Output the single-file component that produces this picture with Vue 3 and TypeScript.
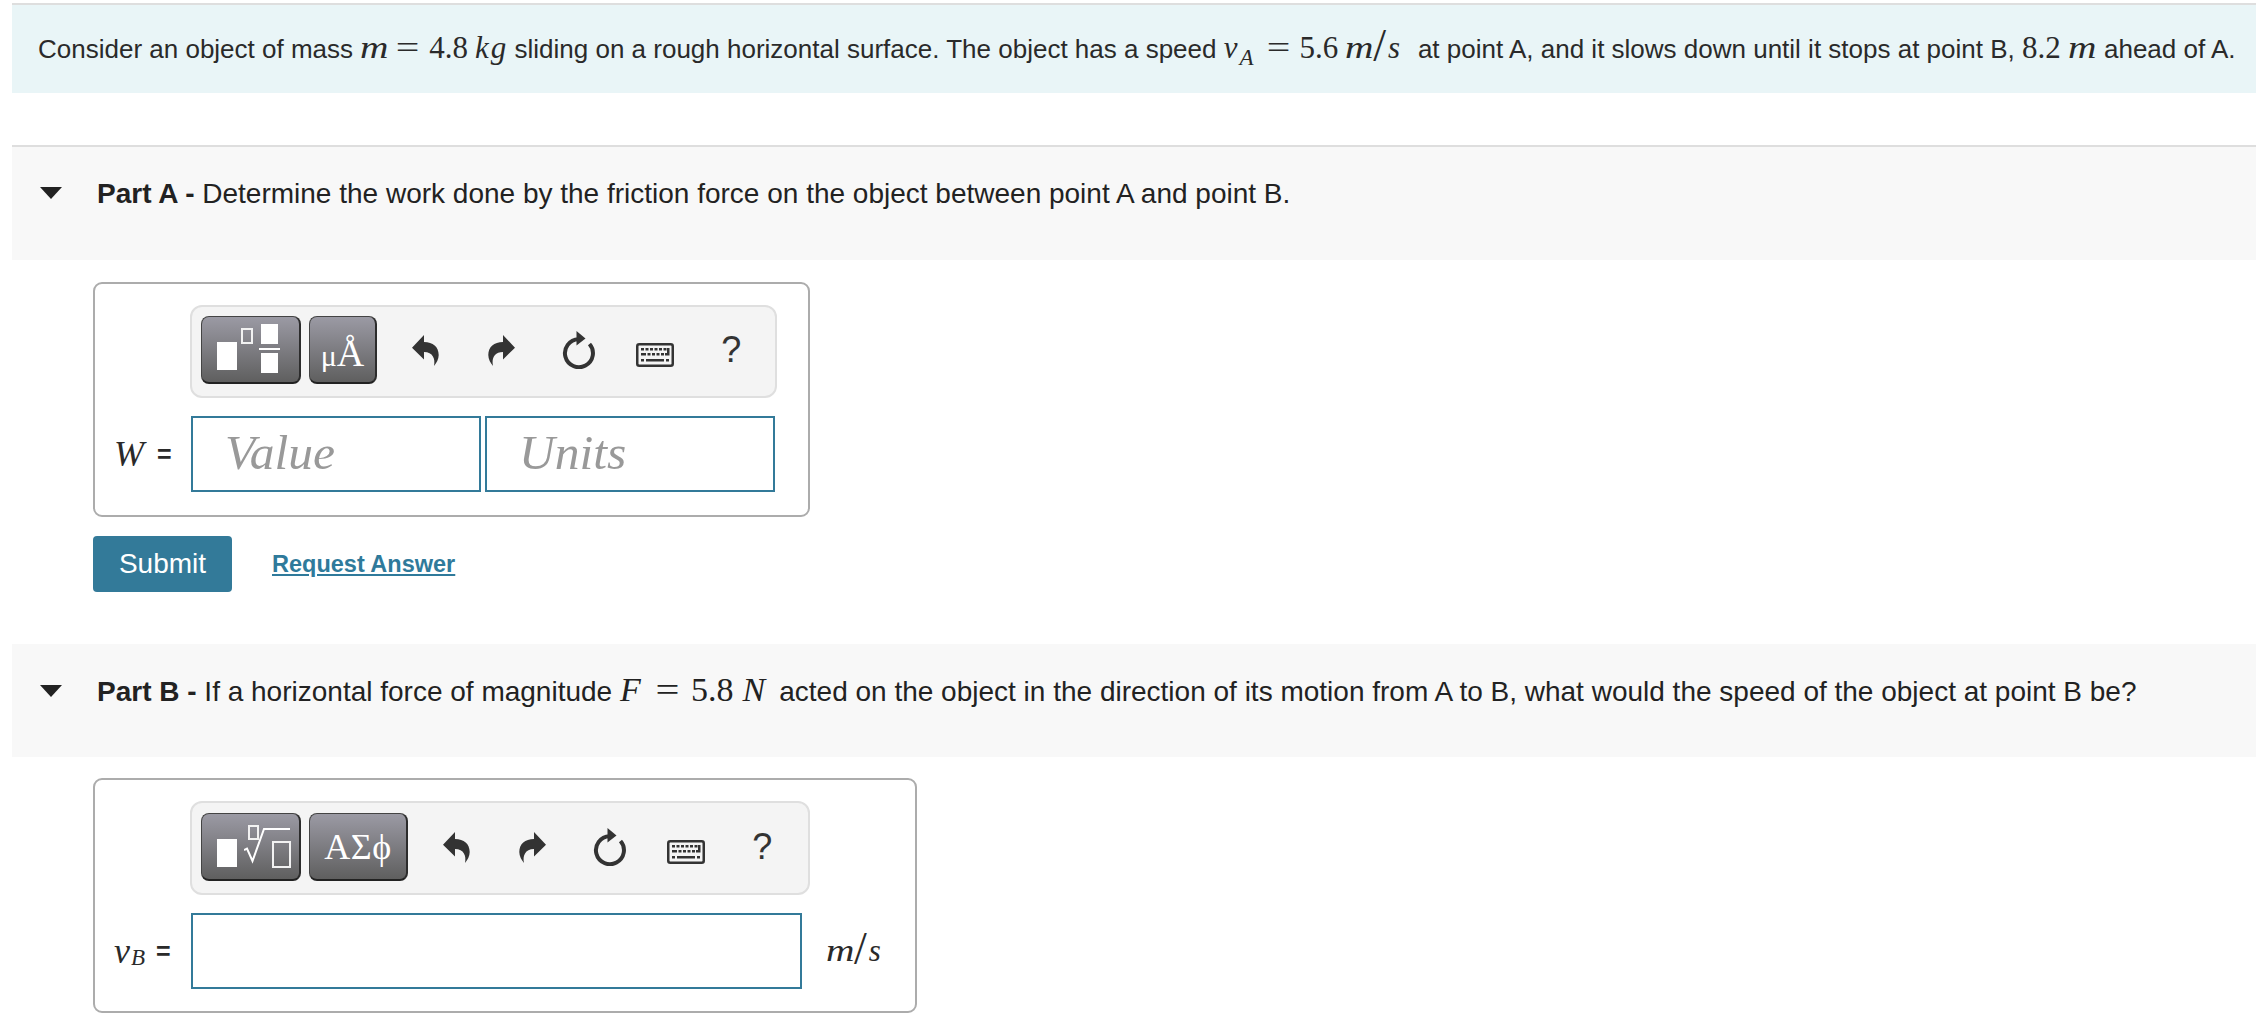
<script setup lang="ts">
const tools = ['undo', 'redo', 'reload', 'keys', 'help']

// keyboard key dots, [x, y, width]
const keyDots: number[][] = [
  [5, 5, 3], [9.500, 5, 3], [14, 5, 3], [18.500, 5, 3], [23, 5, 3], [27.500, 5, 3],
  [5, 10, 5], [11.500, 10, 3], [16, 10, 3], [20.500, 10, 3], [25, 10, 3],
  [5, 16, 3], [10, 16, 18], [30, 16, 3],
]
</script>

<template>
  <div class="page">
    <svg class="defs" aria-hidden="true">
      <symbol id="i-undo" viewBox="0 0 27 31">
        <path d="M0 12.7 12 0v7c9 0 14.7 5 14.7 13 0 4-2.200 8-4.700 11 1.500-7-1-14-10-14v7.500z" />
      </symbol>
      <symbol id="i-redo" viewBox="0 0 27 31">
        <path d="M27 12.7 15 0v7C6 7 .3 12 .3 20c0 4 2.200 8 4.700 11-1.500-7 1-14 10-14v7.500z" />
      </symbol>
      <symbol id="i-reload" viewBox="0 0 34 38">
        <path d="M17.500 8.200A14 14 0 1 0 28.500 13" fill="none" stroke="#333" stroke-width="4" />
        <path d="M15.500 0 24.500 7.500 15.500 14.500z" />
      </symbol>
      <symbol id="i-keys" viewBox="0 0 38 24">
        <rect x="1.250" y="1.250" width="35.500" height="21.500" rx="2" fill="#f4f4f4" stroke="#333" stroke-width="2.500" />
        <rect v-for="(k, i) in keyDots" :key="i" :x="k[0]" :y="k[1]" :width="k[2]" height="2.500" fill="#333" />
        <path d="M31 5h2.500v7.500H29V10h2z" />
      </symbol>
    </svg>

    <section class="intro">
      <span class="line">Consider an object of mass <span class="mi m-wide">m</span><span class="eq">=</span><span class="num">4.8</span><i class="mi kg">kg</i> sliding on a rough horizontal surface. The object has a speed <i class="mi v">v</i><sub class="mi sub">A</sub><span class="eq">=</span><span class="num">5.6</span><span class="mi m-wide">m</span><span class="slash">/</span><i class="mi s">s</i> at point A, and it slows down until it stops at point B, <span class="num">8.2</span><span class="mi m-wide m-last">m</span> ahead of A.</span>
    </section>

    <section class="band band-a">
      <span class="caret"></span>
      <p class="prompt"><b>Part A -</b> Determine the work done by the friction force on the object between point A and point B.</p>
    </section>

    <div class="answer box-a">
      <div class="toolbar">
        <button class="tpl tpl-a">
          <span class="solid big"></span>
          <span class="hollow small"></span>
          <span class="frac"><span class="solid"></span><span class="bar"></span><span class="solid"></span></span>
        </button>
        <button class="sym sym-a"><span class="mu">μ</span><span>Å</span></button>
        <span v-for="t in tools" :key="t" class="tool">
          <span v-if="t === 'help'" class="help">?</span>
          <svg v-else :class="['ic', 'ic-' + t]"><use :href="'#i-' + t" /></svg>
        </span>
      </div>
      <div class="row">
        <span class="label"><i class="w">W</i><span class="lab-eq">=</span></span>
        <div class="field ph">Value</div>
        <div class="field ph">Units</div>
      </div>
    </div>

    <div class="actions">
      <button class="submit">Submit</button>
      <a class="request">Request Answer</a>
    </div>

    <section class="band band-b">
      <span class="caret"></span>
      <p class="prompt"><b>Part B -</b> If a horizontal force of magnitude <i class="pm f">F</i><span class="eq pm">=</span><span class="num pm">5.8</span><i class="pm n">N</i> acted on the object in the direction of its motion from A to B, what would the speed of the object at point B be?</p>
    </section>

    <div class="answer box-b">
      <div class="toolbar">
        <button class="tpl tpl-b">
          <span class="solid big"></span>
          <span class="hollow small"></span>
          <svg class="radical" viewBox="0 0 46 36"><path d="M0 22l3-1.500L8.500 33 20 1h26" fill="none" stroke="#fff" stroke-width="2" /></svg>
          <span class="hollow under"></span>
        </button>
        <button class="sym sym-b">ΑΣϕ</button>
        <span v-for="t in tools" :key="t" class="tool">
          <span v-if="t === 'help'" class="help">?</span>
          <svg v-else :class="['ic', 'ic-' + t]"><use :href="'#i-' + t" /></svg>
        </span>
      </div>
      <div class="row">
        <span class="label"><i class="vb">v</i><sub class="vb-sub">B</sub><span class="lab-eq">=</span></span>
        <div class="field wide"></div>
        <span class="unit"><span class="mi m-wide">m</span><span class="slash">/</span><i class="mi s">s</i></span>
      </div>
    </div>
  </div>
</template>

<style scoped>
.page {
  padding: 3px 0 0 12px;
  font-family: "Liberation Sans", Arial, sans-serif;
  color: #2a2a2a;
  overflow: hidden;
  height: 1015px;
}
.defs { position: absolute; width: 0; height: 0; }
button { font-family: inherit; padding: 0; }

.intro {
  height: 90px;
  box-sizing: border-box;
  border-top: 2px solid #dedede;
  background: #e9f5f7;
  padding: 0 0 2px 26px;
  display: flex;
  align-items: center;
  font-size: 26px;
}
.line { white-space: nowrap; }

.mi, .num, .eq, .pm, .slash, .w, .vb, .vb-sub {
  font-family: "Liberation Serif", "Times New Roman", serif;
}
.mi { font-style: italic; font-size: 31px; }
.m-wide {
  display: inline-block;
  width: 28px;
  transform: scaleX(1.27);
  transform-origin: left;
}
.m-last { margin-right: 1px; }
.eq {
  display: inline-block;
  width: 23px;
  margin: 0 10px 0 8px;
  text-align: center;
  font-size: 31px;
  transform: scaleX(1.35);
}
.num { font-size: 31px; margin-right: 7px; }
.kg { letter-spacing: 2px; margin-right: -1px; }
.v { margin-right: 2px; }
.sub { font-size: 23px; vertical-align: -7px; line-height: 0; margin-right: 5px; }
.slash { font-size: 46px; line-height: 0; margin-right: 2px; vertical-align: -3px; }
.s { margin-right: 10.500px; }
.unit .s { margin-right: 0; }

.band {
  background: #f8f8f8;
  display: flex;
  box-sizing: border-box;
}
.band-a { margin-top: 52px; height: 115px; border-top: 2px solid #dedede; padding-top: 32px; }
.band-b { margin-top: 52px; height: 113px; padding-top: 33px; }
.caret {
  width: 0;
  height: 0;
  margin: 8px 35.500px 0 27.500px;
  border-left: 11px solid transparent;
  border-right: 11px solid transparent;
  border-top: 12px solid #222;
}
.prompt { margin: 0; font-size: 28px; line-height: 30px; white-space: nowrap; color: #222; }
.pm { font-family: "Liberation Serif", serif; font-size: 34px; line-height: 0; }
.f { display: inline-block; width: 24px; }
.eq.pm { margin: 0 12px; transform: scaleX(1.25); }
.num.pm { margin-right: 9px; }
.n { display: inline-block; width: 29px; }

.answer {
  margin-left: 81px;
  box-sizing: border-box;
  height: 235px;
  border: 2px solid #acacac;
  border-radius: 9px;
  padding: 21px 0 0 95px;
}
.box-a { margin-top: 22px; width: 717px; }
.box-b { margin-top: 21px; width: 824px; }

.toolbar {
  box-sizing: border-box;
  width: 587px;
  height: 93px;
  border: 2px solid #dfdfdf;
  border-radius: 12px;
  background: #f4f4f4;
  padding: 9px 0 0 9px;
  display: flex;
}
.box-b .toolbar { width: 620px; height: 94px; padding-top: 10px; }

.tpl, .sym {
  position: relative;
  height: 68px;
  margin-right: 8px;
  border: 1px solid #444;
  border-bottom: 2px solid #222;
  border-right: 2px solid #2c2c2c;
  border-radius: 8px;
  background: linear-gradient(#9b9aa4, #5f5f5f);
  color: #fff;
  font-family: "Liberation Serif", serif;
  box-sizing: border-box;
}
.tpl { width: 100px; }
.sym-a { width: 68px; font-size: 38px; line-height: 72px; white-space: nowrap; }
.mu { font-size: 30px; }
.sym-b { width: 99px; font-size: 36px; letter-spacing: 0.500px; }
.solid { display: block; background: #fff; }
.hollow { position: absolute; border: 2px solid #f2f2f2; box-sizing: border-box; }
.big { position: absolute; left: 15px; top: 25px; width: 20px; height: 28px; }
.tpl-a .small { left: 39px; top: 11px; width: 12px; height: 16px; }
.frac { position: absolute; left: 57px; top: 7px; width: 21px; }
.frac .solid { width: 17px; height: 20px; margin: 0 auto; }
.frac .bar { display: block; height: 2px; background: #fff; margin: 4px 0 3px; }
.tpl-b .small { left: 46px; top: 11px; width: 11px; height: 15px; }
.radical { position: absolute; left: 42px; top: 14px; width: 46px; height: 36px; }
.under { left: 70px; top: 27px; width: 19px; height: 27px; }

.tool {
  width: 76.500px;
  height: 68px;
  display: flex;
  align-items: center;
  justify-content: center;
}
.tpl + .sym + .tool { margin-left: 2px; }
.ic { fill: #333; display: block; }
.ic-undo, .ic-redo { width: 27px; height: 31px; }
.ic-reload { width: 34px; height: 38px; }
.ic-keys { width: 38px; height: 24px; margin-top: 10px; }
.help { font-size: 36px; color: #333; }

.row { display: flex; margin-top: 18px; margin-left: -95px; }
.label {
  box-sizing: border-box;
  width: 96px;
  padding-left: 19px;
  display: flex;
  align-items: center;
  font-size: 31px;
}
.w { font-style: italic; font-size: 36px; }
.vb { font-style: italic; font-size: 36px; }
.vb-sub { font-style: italic; font-size: 23px; align-self: flex-end; margin-bottom: 18px; margin-left: 1px; }
.lab-eq { font-size: 25px; font-weight: 700; margin-left: 13px; }
.box-b .lab-eq { margin-left: 11px; }
.field {
  box-sizing: border-box;
  width: 290px;
  height: 76px;
  border: 2px solid #337a99;
  background: #fff;
}
.field + .field { margin-left: 4px; }
.ph {
  padding-left: 32px;
  font-family: "Liberation Serif", serif;
  font-style: italic;
  font-size: 49.500px;
  line-height: 70px;
  color: #999;
}
.wide { width: 611px; }
.unit { margin-left: 24px; align-self: center; white-space: nowrap; font-size: 31px; }

.actions { margin: 19px 0 0 81px; display: flex; align-items: center; height: 56px; }
.submit {
  width: 139px;
  height: 56px;
  border: 0;
  border-radius: 4px;
  background: #337a99;
  color: #fff;
  font-size: 28px;
}
.request {
  margin-left: 40px;
  font-size: 23.500px;
  font-weight: 700;
  color: #2f7a9b;
  text-decoration: underline;
}
</style>

<style>
body { background: #fff; }
</style>
